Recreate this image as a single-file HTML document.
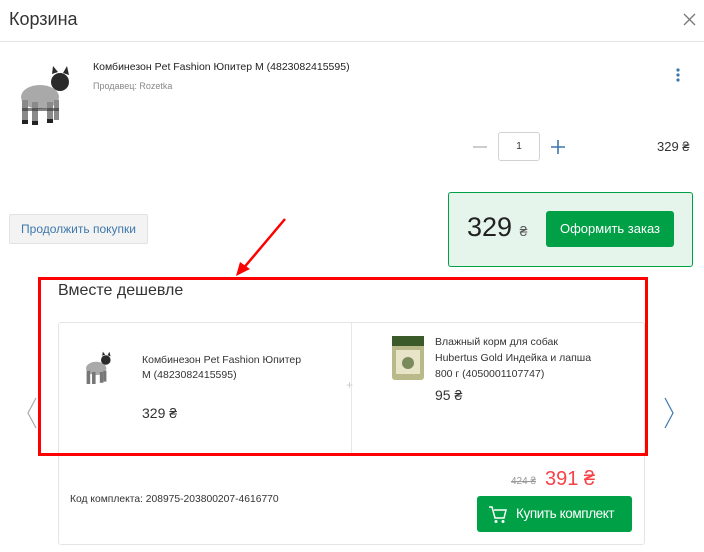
<!DOCTYPE html>
<html><head><meta charset="utf-8"><style>
*{margin:0;padding:0;box-sizing:border-box}
body{width:704px;height:552px;background:#fff;font-family:"Liberation Sans",sans-serif;color:#333;position:relative;overflow:hidden}
.a{position:absolute;white-space:nowrap}
</style></head><body>
<div class="a" style="left:9px;top:9px;font-size:18px;color:#333">Корзина</div>
<svg class="a" style="left:683px;top:13px" width="13" height="13"><path d="M1 1L12 12M12 1L1 12" stroke="#777" stroke-width="1.3"/></svg>
<div class="a" style="left:0;top:41px;width:704px;height:1px;background:#e5e5e5"></div>

<svg class="a" style="left:14px;top:60px" width="62" height="66" viewBox="0 0 62 66">
<ellipse cx="26" cy="37" rx="19" ry="12" fill="#a9a9a9"/>
<circle cx="46" cy="22" r="9" fill="#2a2a2a"/><path d="M38 14l1 -8 5 6zM49 13l4-7 2 9z" fill="#2a2a2a"/>
<rect x="8" y="40" width="6" height="22" fill="#8a8a8a"/><rect x="18" y="42" width="6" height="22" fill="#8a8a8a"/><rect x="33" y="42" width="6" height="20" fill="#8a8a8a"/><rect x="40" y="40" width="5" height="20" fill="#8a8a8a"/>
<rect x="8" y="48" width="37" height="3" fill="#333" opacity=".6"/>
<rect x="8" y="60" width="6" height="4" fill="#222"/><rect x="18" y="61" width="6" height="4" fill="#222"/><rect x="33" y="59" width="6" height="4" fill="#222"/>
</svg>
<div class="a" style="left:93px;top:61px;font-size:10.5px;color:#222">Комбинезон Pet Fashion Юпитер M (4823082415595)</div>
<div class="a" style="left:93px;top:81px;font-size:9px;color:#888">Продавец: Rozetka</div>
<svg class="a" style="left:675px;top:67px" width="6" height="16"><circle cx="3" cy="3" r="1.6" fill="#3e77aa"/><circle cx="3" cy="8" r="1.6" fill="#3e77aa"/><circle cx="3" cy="13" r="1.6" fill="#3e77aa"/></svg>

<div class="a" style="left:473px;top:146px;width:14px;height:1.5px;background:#ccc"></div>
<div class="a" style="left:498px;top:132px;width:42px;height:29px;border:1px solid #d2d2d2;border-radius:3px;font-size:10px;text-align:center;line-height:27px">1</div>
<svg class="a" style="left:551px;top:140px" width="14" height="14"><path d="M7 0V14M0 7H14" stroke="#3e77aa" stroke-width="1.6"/></svg>
<div class="a" style="left:657px;top:139px;font-size:13px">329 ₴</div>

<div class="a" style="left:9px;top:214px;width:139px;height:30px;background:#f3f3f3;border:1px solid #e2e2e2;border-radius:2px;font-size:12px;color:#3e77aa;text-align:center;line-height:28px">Продолжить покупки</div>

<div class="a" style="left:448px;top:192px;width:245px;height:75px;background:#e6f5ec;border:1px solid #00a046;border-radius:3px"></div>
<div class="a" style="left:467px;top:212px;font-size:27px;color:#222">329 <span style="font-size:14px;color:#555">₴</span></div>
<div class="a" style="left:546px;top:211px;width:128px;height:36px;background:#00a046;border-radius:3px;color:#fff;font-size:13px;text-align:center;line-height:36px">Оформить заказ</div>

<svg class="a" style="left:0;top:0" width="704" height="552"><path d="M285 219L242 270" stroke="#f00" stroke-width="2.5"/><path d="M236 276L240 262L250 269Z" fill="#f00"/></svg>

<div class="a" style="left:58px;top:322px;width:587px;height:223px;border:1px solid #e5e5e5;border-radius:3px"></div>
<div class="a" style="left:351px;top:322px;width:1px;height:133px;background:#e8e8e8"></div>
<div class="a" style="left:346px;top:378px;font-size:12px;color:#ccc">+</div>
<div class="a" style="left:58px;top:282px;font-size:16px;color:#333">Вместе дешевле</div>

<svg class="a" style="left:83px;top:348px" width="30" height="36" viewBox="0 0 50 60">
<ellipse cx="22" cy="34" rx="17" ry="11" fill="#a9a9a9"/><circle cx="38" cy="20" r="8" fill="#2a2a2a"/><path d="M32 13l1 -7 4 5zM41 12l3-6 2 8z" fill="#2a2a2a"/>
<rect x="6" y="38" width="6" height="22" fill="#777"/><rect x="15" y="40" width="6" height="20" fill="#777"/><rect x="28" y="40" width="6" height="18" fill="#777"/><rect x="34" y="38" width="5" height="18" fill="#777"/></svg>
<div class="a" style="left:142px;top:353px;font-size:10.5px;line-height:15px;color:#333">Комбинезон Pet Fashion Юпитер<br>M (4823082415595)</div>
<div class="a" style="left:142px;top:405px;font-size:14px">329 ₴</div>

<svg class="a" style="left:391px;top:334px" width="34" height="48"><rect x="1" y="2" width="32" height="44" rx="3" fill="#b9b98a"/><rect x="1" y="2" width="32" height="10" fill="#3b5a2a"/><rect x="5" y="16" width="24" height="24" fill="#e8e4c8"/><circle cx="17" cy="29" r="6" fill="#7a8a5a"/></svg>
<div class="a" style="left:435px;top:334px;font-size:10.5px;line-height:16px;color:#333">Влажный корм для собак<br>Hubertus Gold Индейка и лапша<br>800 г (4050001107747)</div>
<div class="a" style="left:435px;top:387px;font-size:14px">95 ₴</div>

<svg class="a" style="left:26px;top:397px" width="12" height="32"><path d="M10 1L2 16L10 31" fill="none" stroke="#aaa" stroke-width="1.2"/></svg>
<svg class="a" style="left:663px;top:397px" width="12" height="32"><path d="M2 1L10 16L2 31" fill="none" stroke="#3e77aa" stroke-width="1.2"/></svg>

<div class="a" style="left:38px;top:277px;width:610px;height:179px;border:3px solid #f00"></div>

<div class="a" style="left:511px;top:476px;font-size:10px;color:#999;text-decoration:line-through">424 ₴</div>
<div class="a" style="left:545px;top:468px;font-size:20px;color:#f84147">391 ₴</div>
<div class="a" style="left:70px;top:494px;font-size:10.3px;color:#333">Код комплекта: 208975-203800207-4616770</div>
<div class="a" style="left:477px;top:496px;width:155px;height:36px;background:#00a046;border-radius:3px;color:#fff;font-size:13.5px;letter-spacing:-0.4px;line-height:36px;padding-left:39px">Купить комплект</div>
<svg class="a" style="left:488px;top:505px" width="20" height="19"><path d="M1 2H4L7 13H16L18 5H6" fill="none" stroke="#fff" stroke-width="1.5"/><circle cx="8" cy="16.5" r="1.5" fill="#fff"/><circle cx="15" cy="16.5" r="1.5" fill="#fff"/></svg>
</body></html>
